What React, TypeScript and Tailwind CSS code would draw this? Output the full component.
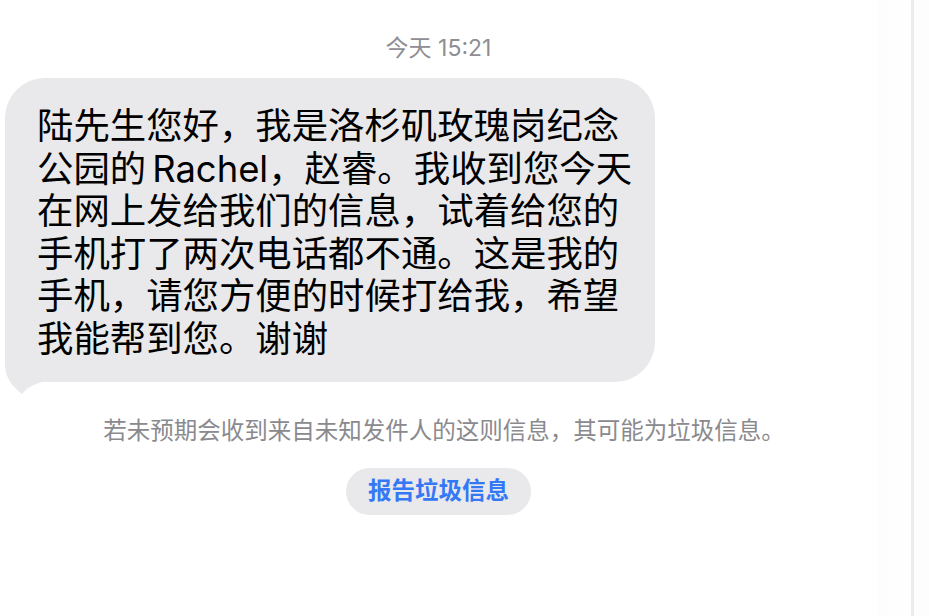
const lines = [
  '陆先生您好，我是洛杉矶玫瑰岗纪念',
  null,
  '在网上发给我们的信息，试着给您的',
  '手机打了两次电话都不通。这是我的',
  '手机，请您方便的时候打给我，希望',
  '我能帮到您。谢谢',
];

// iMessage-style tail, sits under the text but over the bubble corner
const Tail = () => (
  <svg className="absolute bottom-[-13px] left-0" width="60" height="60" viewBox="0 0 60 60">
    <path d="M0 0 L0 30 C0 43 8 52 17 59 C22 53 30 47 46 46 L60 46 L60 0 Z" fill="#e9e9eb" />
  </svg>
);

export default function App() {
  return (
    <div
      className="flex h-[616px] w-[929px] overflow-hidden bg-white"
      style={{ fontFamily: 'Inter, "Noto Sans CJK SC", sans-serif' }}
    >
      <div className="flex w-[877px] flex-col">
        <div className="pt-[34px] text-center text-[23px] leading-[28px] text-[#8e8e93]">今天 15:21</div>

        <div className="relative ml-[5px] mt-[16px] w-[650px] whitespace-nowrap rounded-[40px] bg-[#e9e9eb] pb-[21px] pl-[32px] pt-[27px] text-[36.4px] leading-[42.6px] text-black">
          <Tail />
          <div className="relative">
            {lines.map((l, i) =>
              l === null ? (
                <div key={i}>
                  公园的<span className="ml-[6px]">Rachel</span>，赵睿。我收到您今天
                </div>
              ) : (
                <div key={i}>{l}</div>
              ),
            )}
          </div>
        </div>

        <p className="mt-[34px] pl-[11px] text-center text-[23.5px] leading-[30px] text-[#8a8a8e]">
          若未预期会收到来自未知发件人的这则信息，其可能为垃圾信息。
        </p>

        <div className="mt-[22px] flex justify-center">
          <button className="h-[47px] w-[185px] rounded-full bg-[#e9e9eb] text-[23.5px] font-semibold text-[#3478f6]">
            报告垃圾信息
          </button>
        </div>
      </div>
      <div className="flex-1 bg-gradient-to-r from-[#fdfdfd] to-white" />
      <div className="w-[3px] bg-[#ececec]" />
      <div className="w-[15px] bg-[#fdfdfd]" />
    </div>
  );
}
